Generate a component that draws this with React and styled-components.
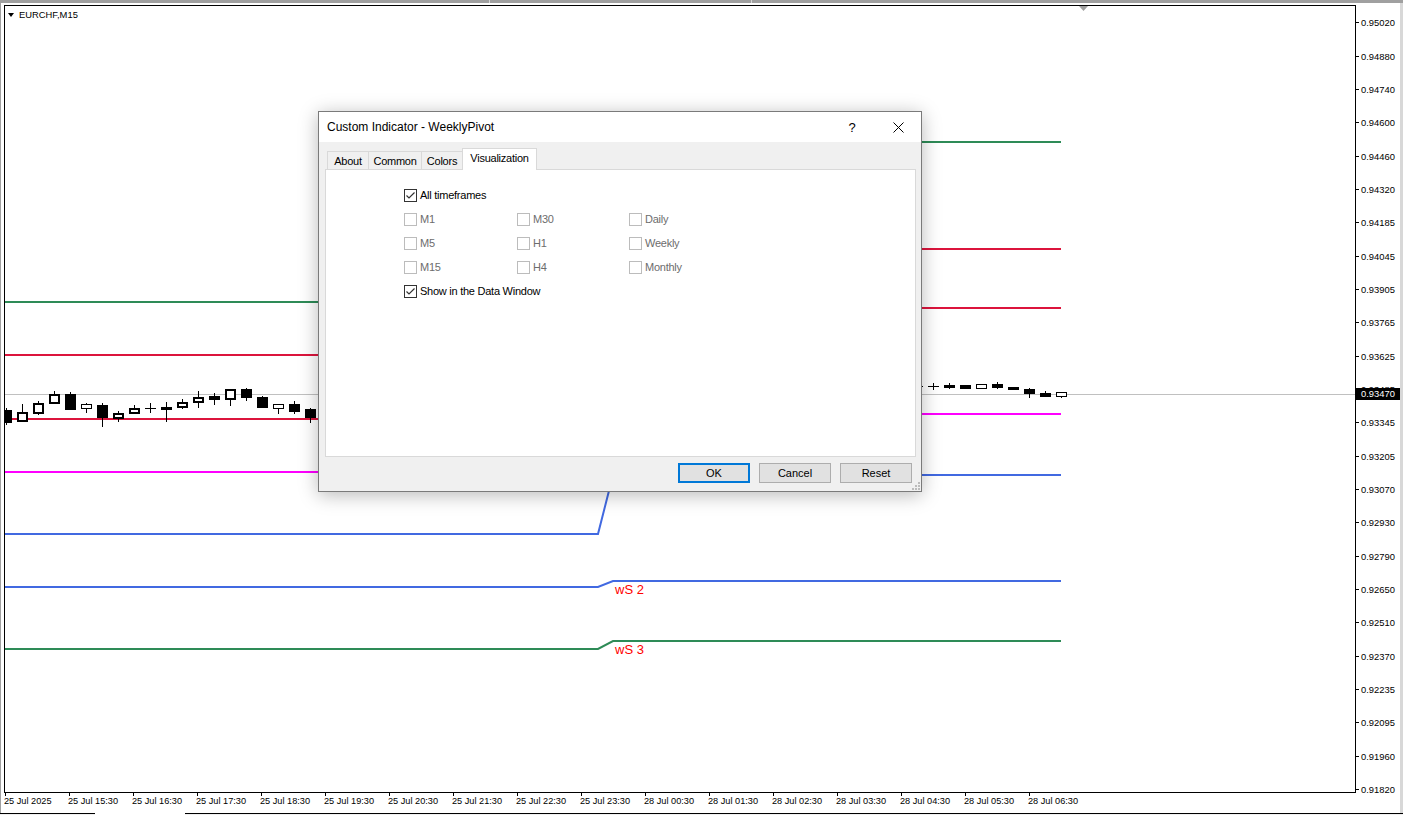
import React from 'react'
import styled, { createGlobalStyle } from 'styled-components'

const GlobalStyle = createGlobalStyle`
  html, body { margin: 0; padding: 0; background: #f0f0f0; }
  body { font-family: "Liberation Sans", Arial, sans-serif; overflow: hidden; }
  * { box-sizing: border-box; }
`

const prices = [
  '0.95020', '0.94880', '0.94740', '0.94600', '0.94460', '0.94320', '0.94185', '0.94045',
  '0.93905', '0.93765', '0.93625', '0.93485', '0.93345', '0.93205', '0.93070', '0.92930',
  '0.92790', '0.92650', '0.92510', '0.92370', '0.92235', '0.92095', '0.91960', '0.91820',
]

const times = [
  '25 Jul 2025', '25 Jul 15:30', '25 Jul 16:30', '25 Jul 17:30', '25 Jul 18:30', '25 Jul 19:30',
  '25 Jul 20:30', '25 Jul 21:30', '25 Jul 22:30', '25 Jul 23:30', '28 Jul 00:30', '28 Jul 01:30',
  '28 Jul 02:30', '28 Jul 03:30', '28 Jul 04:30', '28 Jul 05:30', '28 Jul 06:30',
]

// weekly pivot levels: y before the week change, y after
const levels = [
  { color: '#2e8b57', from: 302, to: 142 },
  { color: '#dc143c', from: 355, to: 249 },
  { color: '#dc143c', from: 419, to: 308 },
  { color: '#ff00ff', from: 472, to: 414 },
  { color: '#4169e1', from: 534, to: 475 },
  { color: '#4169e1', from: 587, to: 581, label: 'wS 2' },
  { color: '#2e8b57', from: 649, to: 641, label: 'wS 3' },
]

// [bar, bodyTop, bodyBottom, high, low, bearish]
const candles = [
  [0, 410, 422, 408, 424, 1],
  [1, 412, 421, 404, 421, 0],
  [2, 403, 413, 401, 414, 0],
  [3, 394, 403, 391, 403, 0],
  [4, 394, 409, 392, 409, 1],
  [5, 404, 408, 403, 412, 0],
  [6, 405, 417, 403, 426, 1],
  [7, 413, 418, 411, 421, 0],
  [8, 408, 413, 405, 413, 0],
  [9, 408, 408, 403, 412, 0],
  [10, 407, 409, 402, 421, 1],
  [11, 402, 407, 399, 408, 0],
  [12, 397, 402, 391, 407, 0],
  [13, 396, 399, 393, 404, 1],
  [14, 389, 399, 389, 405, 0],
  [15, 389, 397, 388, 400, 1],
  [16, 397, 407, 396, 407, 1],
  [17, 404, 408, 404, 413, 0],
  [18, 404, 411, 401, 413, 1],
  [19, 409, 417, 408, 422, 1],
  [57, 386, 386, 384, 388, 0],
  [58, 386, 386, 383, 389, 0],
  [59, 385, 387, 383, 388, 1],
  [60, 385, 388, 385, 388, 1],
  [61, 384, 388, 384, 388, 0],
  [62, 384, 387, 382, 388, 1],
  [63, 387, 389, 387, 389, 1],
  [64, 389, 393, 388, 397, 1],
  [65, 393, 396, 391, 396, 1],
  [66, 392, 396, 392, 397, 0],
]

const Window = styled.div`
  position: relative;
  width: 1403px;
  height: 815px;
  display: flex;
  flex-direction: column;
  background: #fff;
  overflow: hidden;
`
const TopStrip = styled.div`
  display: flex;
  height: 3px;
  background: #a0a0a0;
`
const StripPart = styled.div`
  width: ${p => p.$w}px;
  flex: ${p => (p.$w ? 'none' : '1')};
  border-right: ${p => (p.$w ? '1px solid #d6d6d6' : 'none')};
`
const ChartWindow = styled.div`
  display: grid;
  grid-template-columns: 1352px 44px;
  grid-template-rows: 788px 20px;
  height: 810px;
  padding: 2px 0 0 3px;
  border-left: 1px solid #a0a0a0;
  border-right: 3px solid #d8d8d8;
  background: #fff;
`
const Plot = styled.div`
  grid-column: 1;
  grid-row: 1;
  position: relative;
  border: 1px solid #000;
  overflow: hidden;
`
const PlotSvg = styled.svg`
  display: block;
`
const SymbolTag = styled.div`
  position: absolute;
  left: 3px;
  top: 3px;
  display: flex;
  align-items: center;
  gap: 5px;
  font-size: 9.4px;
  color: #000;
`
const DownArrow = styled.span`
  width: 0;
  height: 0;
  border-left: 3.5px solid transparent;
  border-right: 3.5px solid transparent;
  border-top: 4px solid #000;
`
const PriceAxis = styled.div`
  grid-column: 2;
  grid-row: 1 / 3;
  position: relative;
  display: flex;
  flex-direction: column;
  padding-top: 1px;
  overflow: hidden;
`
const PriceLabel = styled.div`
  flex: none;
  height: 33.35px;
  display: flex;
  align-items: center;
  font-size: 9.4px;
  color: #000;
  white-space: nowrap;
`
const PriceTick = styled.span`
  width: 3px;
  height: 1px;
  margin-right: 2px;
  background: #000;
`
const CurrentPrice = styled.div`
  position: absolute;
  left: 0;
  top: 383px;
  width: 44px;
  height: 12px;
  padding-left: 5px;
  background: #000;
  color: #fff;
  font-size: 9.4px;
  line-height: 12px;
`
const TimeAxis = styled.div`
  grid-column: 1;
  grid-row: 2;
  display: flex;
  overflow: hidden;
`
const TimeCell = styled.div`
  flex: none;
  width: 64px;
  display: flex;
  flex-direction: column;
`
const TimeTick = styled.span`
  width: 1px;
  height: 3px;
  margin-left: 1px;
  background: #000;
`
const TimeText = styled.span`
  font-size: 9.2px;
  line-height: 11px;
  color: #000;
  white-space: nowrap;
`
const BottomBar = styled.div`
  display: flex;
  height: 2px;
  background: #f0f0f0;
`
const BarLine = styled.div`
  width: ${p => (p.$w ? `${p.$w}px` : 'auto')};
  flex: ${p => (p.$w ? 'none' : '1')};
  border-top: 1px solid ${p => (p.$open ? '#fff' : '#000')};
  background: ${p => (p.$open ? '#fff' : 'transparent')};
`

/* dialog */
const Dialog = styled.div`
  position: absolute;
  left: 318px;
  top: 111px;
  width: 604px;
  height: 381px;
  display: flex;
  flex-direction: column;
  background: #f0f0f0;
  border: 1px solid #7a7a7a;
  box-shadow: 0 3px 18px rgba(0, 0, 0, 0.28);
  font-size: 11px;
  letter-spacing: -0.25px;
  color: #000;
`
const TitleBar = styled.div`
  height: 30px;
  display: flex;
  align-items: center;
  padding-left: 8px;
  background: #fff;
`
const Title = styled.div`
  flex: 1;
  font-size: 12px;
  letter-spacing: 0;
`
const CaptionButton = styled.div`
  width: 46px;
  height: 30px;
  display: flex;
  align-items: center;
  justify-content: center;
  font-size: 13px;
  letter-spacing: 0;
`
const DialogBody = styled.div`
  flex: 1;
  display: flex;
  flex-direction: column;
  padding: 6px 5px 0 6px;
`
const TabStrip = styled.div`
  display: flex;
  align-items: flex-end;
  height: 21px;
  padding-left: 2px;
`
const Tab = styled.div`
  position: relative;
  z-index: ${p => (p.$active ? 2 : 1)};
  width: ${p => p.$w}px;
  height: ${p => (p.$active ? 22 : 18)}px;
  margin-left: ${p => (p.$first ? 0 : -1)}px;
  margin-bottom: ${p => (p.$active ? -1 : 0)}px;
  display: flex;
  align-items: center;
  justify-content: center;
  padding-bottom: ${p => (p.$active ? 3 : 0)}px;
  background: ${p => (p.$active ? '#fff' : '#f0f0f0')};
  border: 1px solid #d9d9d9;
  border-bottom: none;
`
const Panel = styled.div`
  height: 288px;
  display: flex;
  flex-direction: column;
  padding: 13px 0 0 78px;
  background: #fff;
  border: 1px solid #d9d9d9;
`
const TfGrid = styled.div`
  display: grid;
  grid-template-columns: 113px 112px 1fr;
`
const CheckRow = styled.label`
  height: 24px;
  display: flex;
  align-items: center;
  gap: 3px;
  color: ${p => (p.$disabled ? '#6d6d6d' : '#000')};
`
const Box = styled.span`
  width: 13px;
  height: 13px;
  display: flex;
  align-items: center;
  justify-content: center;
  background: #fff;
  border: 1px solid ${p => (p.$disabled ? '#bcbcbc' : '#333')};
`
const ButtonRow = styled.div`
  display: flex;
  justify-content: flex-end;
  gap: 9px;
  margin-top: 6px;
  padding-right: 4px;
`
const Button = styled.div`
  width: 72px;
  height: 20px;
  display: flex;
  align-items: center;
  justify-content: center;
  background: #e1e1e1;
  border: ${p => (p.$primary ? '2px solid #0078d7' : '1px solid #adadad')};
  letter-spacing: 0;
`
const Grip = styled.svg`
  position: absolute;
  right: 1px;
  bottom: 1px;
`

const Check = ({ checked, disabled, children }) => (
  <CheckRow $disabled={disabled}>
    <Box $disabled={disabled}>
      {checked && (
        <svg width="11" height="11" viewBox="0 0 11 11">
          <polyline points="1.5,5.5 4,8 9.5,2.5" fill="none" stroke="#333" strokeWidth="1.2" />
        </svg>
      )}
    </Box>
    {children}
  </CheckRow>
)

const Candle = ({ k, top, bottom, high, low, bear }) => {
  const cx = Math.round(6 + k * 15.98)
  const x = cx - 5
  const h = bottom - top
  return (
    <g shapeRendering="crispEdges">
      <rect x={cx} y={high} width="1" height={low - high + 1} fill="#000" />
      {h === 0 ? (
        <rect x={x} y={top} width="11" height="1" fill="#000" />
      ) : bear ? (
        <rect x={x} y={top} width="11" height={h + 1} fill="#000" />
      ) : (
        <>
          <rect x={x} y={top} width="11" height={h + 1} fill="#000" />
          <rect
            x={x + (h >= 5 ? 2 : 1)}
            y={top + (h >= 5 ? 2 : 1)}
            width={h >= 5 ? 7 : 9}
            height={Math.max(h + 1 - (h >= 5 ? 4 : 2), 1)}
            fill="#fff"
          />
        </>
      )}
    </g>
  )
}

const ChartDrawing = () => (
  <PlotSvg width="1350" height="786" viewBox="5 6 1350 786">
    <line x1="5" y1="394.5" x2="1355" y2="394.5" stroke="#c0c0c0" strokeWidth="1" />
    {levels.map((l, i) => (
      <path
        key={i}
        d={`M5 ${l.from} H598 L613 ${l.to} H1061`}
        fill="none"
        stroke={l.color}
        strokeWidth="2"
      />
    ))}
    {levels.filter(l => l.label).map(l => (
      <text
        key={l.label}
        x="615"
        y={l.to + 13}
        fill="#ff0000"
        fontSize="13"
        fontFamily="Liberation Sans, Arial, sans-serif"
      >
        {l.label}
      </text>
    ))}
    {candles.map(([k, top, bottom, high, low, bear]) => (
      <Candle key={k} k={k} top={top} bottom={bottom} high={high} low={low} bear={bear} />
    ))}
    <polygon points="1079,6 1088,6 1083.5,11" fill="#a0a0a0" />
  </PlotSvg>
)

const App = () => (
  <Window>
    <GlobalStyle />
    <TopStrip>
      <StripPart $w={490} />
      <StripPart $w={262} />
      <StripPart />
    </TopStrip>
    <ChartWindow>
      <Plot>
        <ChartDrawing />
        <SymbolTag>
          <DownArrow />
          EURCHF,M15
        </SymbolTag>
      </Plot>
      <PriceAxis>
        {prices.map(p => (
          <PriceLabel key={p}>
            <PriceTick />
            {p}
          </PriceLabel>
        ))}
        <CurrentPrice>0.93470</CurrentPrice>
      </PriceAxis>
      <TimeAxis>
        {times.map(t => (
          <TimeCell key={t}>
            <TimeTick />
            <TimeText>{t}</TimeText>
          </TimeCell>
        ))}
      </TimeAxis>
    </ChartWindow>
    <BottomBar>
      <BarLine $w={95} />
      <BarLine $w={90} $open />
      <BarLine />
    </BottomBar>

    <Dialog>
      <TitleBar>
        <Title>Custom Indicator - WeeklyPivot</Title>
        <CaptionButton>?</CaptionButton>
        <CaptionButton>
          <svg width="11" height="11" viewBox="0 0 11 11">
            <path d="M0.5 0.5 L10.5 10.5 M10.5 0.5 L0.5 10.5" stroke="#000" strokeWidth="1" />
          </svg>
        </CaptionButton>
      </TitleBar>
      <DialogBody>
        <TabStrip>
          <Tab $w={42} $first>About</Tab>
          <Tab $w={54}>Common</Tab>
          <Tab $w={42}>Colors</Tab>
          <Tab $w={75} $active>Visualization</Tab>
        </TabStrip>
        <Panel>
          <Check checked>All timeframes</Check>
          <TfGrid>
            <Check disabled>M1</Check>
            <Check disabled>M30</Check>
            <Check disabled>Daily</Check>
            <Check disabled>M5</Check>
            <Check disabled>H1</Check>
            <Check disabled>Weekly</Check>
            <Check disabled>M15</Check>
            <Check disabled>H4</Check>
            <Check disabled>Monthly</Check>
          </TfGrid>
          <Check checked>Show in the Data Window</Check>
        </Panel>
        <ButtonRow>
          <Button $primary>OK</Button>
          <Button>Cancel</Button>
          <Button>Reset</Button>
        </ButtonRow>
      </DialogBody>
      <Grip width="9" height="9" viewBox="0 0 9 9">
        {[[7, 1], [7, 4], [4, 4], [7, 7], [4, 7], [1, 7]].map(([x, y]) => (
          <rect key={`${x}-${y}`} x={x} y={y} width="2" height="2" fill="#bcbcbc" />
        ))}
      </Grip>
    </Dialog>
  </Window>
)

export default App
